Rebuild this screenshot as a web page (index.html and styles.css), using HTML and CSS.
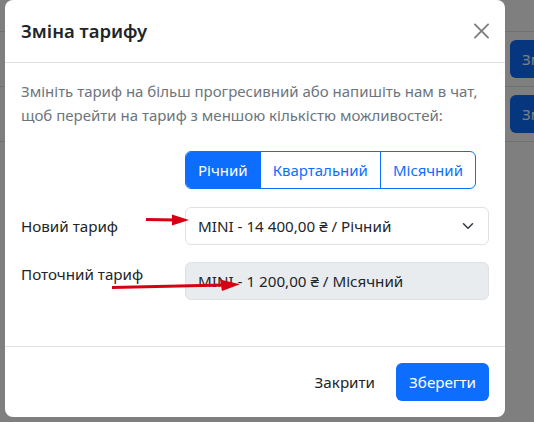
FILE: index.html
```html
<!DOCTYPE html>
<html lang="uk">
<head>
<meta charset="utf-8">
<title>Зміна тарифу</title>
<link rel="stylesheet" href="styles.css">
</head>
<body>
<div class="page">
  <div class="page-row page-row-top"></div>
  <div class="page-row"><span class="page-btn">Зм</span></div>
  <div class="page-row"><span class="page-btn">Зм</span></div>
</div>
<div class="backdrop"></div>
<div class="modal">
  <div class="modal-header">
    <h5 class="modal-title">Зміна тарифу</h5>
    <span class="btn-close">
      <svg viewBox="0 0 16 16" width="16" height="16"><path d="M.293.293a1 1 0 0 1 1.414 0L8 6.586 14.293.293a1 1 0 1 1 1.414 1.414L9.414 8l6.293 6.293a1 1 0 0 1-1.414 1.414L8 9.414l-6.293 6.293a1 1 0 0 1-1.414-1.414L6.586 8 .293 1.707a1 1 0 0 1 0-1.414z"/></svg>
    </span>
  </div>
  <div class="modal-body">
    <p class="note">Змініть тариф на більш прогресивний або напишіть нам в чат, щоб перейти на тариф з меншою кількістю можливостей:</p>
    <div class="form-row row-group">
      <div></div>
      <div class="btn-group">
        <span class="seg active">Річний</span>
        <span class="seg">Квартальний</span>
        <span class="seg">Місячний</span>
      </div>
    </div>
    <div class="form-row row-select">
      <div class="label label-center">Новий тариф</div>
      <div class="select">
        <span>MINI - 14 400,00 ₴ / Річний</span>
        <svg class="chev" viewBox="0 0 16 16" width="16" height="12"><path fill="none" stroke="#343a40" stroke-linecap="round" stroke-linejoin="round" stroke-width="2" d="m2 5 6 6 6-6"/></svg>
      </div>
    </div>
    <div class="form-row row-current">
      <div class="label">Поточний тариф</div>
      <div class="input-ro">MINI - 1 200,00 ₴ / Місячний</div>
    </div>
  </div>
  <div class="modal-footer">
    <span class="btn btn-link">Закрити</span>
    <span class="btn btn-primary">Зберегти</span>
  </div>
</div>
<svg class="annot" width="534" height="422" viewBox="0 0 534 422">
  <line x1="146" y1="219.5" x2="176" y2="220" stroke="#d60012" stroke-width="3"/>
  <polygon points="172,214.5 189,220 172,225.5" fill="#d60012"/>
  <line x1="112" y1="287.5" x2="224" y2="285" stroke="#d60012" stroke-width="3"/>
  <polygon points="220,279.5 240,284.3 222,291" fill="#d60012"/>
</svg>
</body>
</html>
```
FILE: styles.css
```css
* { box-sizing: border-box; }
html, body { margin: 0; padding: 0; }
body {
  width: 534px;
  height: 422px;
  overflow: hidden;
  background: #fff;
  font-family: "Noto Sans", "Open Sans", sans-serif;
  font-size: 16px;
  line-height: 24px;
  color: #212529;
}
.page { width: 534px; }
.page-row {
  height: 55px;
  border-bottom: 1px solid #dee2e6;
  padding: 8px 0 8px 510px;
}
.page-row-top { height: 32px; padding: 0; }
.page-btn {
  display: inline-block;
  width: 24px;
  height: 38px;
  padding: 7px 0 7px 12px;
  background: #0d6efd;
  color: #fff;
  border-radius: 6px 0 0 6px;
  white-space: nowrap;
  overflow: hidden;
  font-size: 15px;
}
.backdrop {
  position: fixed;
  inset: 0;
  background: rgba(0, 0, 0, 0.5);
}
.modal {
  position: fixed;
  left: 5px;
  top: 0;
  width: 500px;
  background: #fff;
  border-radius: 8px;
}
.modal-header {
  display: flex;
  align-items: center;
  justify-content: space-between;
  padding: 16px;
  border-bottom: 1px solid #dee2e6;
}
.modal-title {
  margin: 0;
  font-size: 18.5px;
  line-height: 30px;
  font-weight: 600;
}
.btn-close {
  display: flex;
  align-items: center;
  justify-content: center;
  width: 32px;
  height: 32px;
  margin: -8px -8px -8px auto;
  opacity: 0.5;
}
.btn-close svg { display: block; width: 15px; height: 16px; }
.modal-body { padding: 16px 16px 46px; }
.note {
  margin: 0 0 24px;
  color: #6c757d;
  font-size: 15px;
}
.form-row {
  display: grid;
  grid-template-columns: 140px 1fr;
  column-gap: 24px;
}
.row-group { margin-bottom: 18px; }
.row-select { margin-bottom: 17px; }
.btn-group {
  display: flex;
  justify-self: start;
  border: 1px solid #0d6efd;
  border-radius: 6px;
  overflow: hidden;
}
.seg {
  padding: 6px 12px;
  color: #0d6efd;
  border-left: 1px solid #0d6efd;
  font-size: 15px;
}
.seg:first-child { border-left: 0; }
.seg.active { background: #0d6efd; color: #fff; }
.label { font-size: 15.2px; }
.label-center { padding: 7px 0; }
.select, .input-ro {
  height: 38px;
  border: 1px solid #dee2e6;
  border-radius: 6px;
  padding: 6px 12px;
  font-size: 15.2px;
}
.select {
  display: flex;
  align-items: center;
  justify-content: space-between;
}
.chev { display: block; }
.input-ro { background: #e9ecef; }
.modal-footer {
  display: flex;
  justify-content: flex-end;
  align-items: center;
  gap: 8px;
  padding: 16px;
  border-top: 1px solid #dee2e6;
}
.btn {
  display: inline-block;
  height: 38px;
  padding: 6px 12px;
  border: 1px solid transparent;
  border-radius: 6px;
  font-size: 15.2px;
}
.btn-primary { background: #0d6efd; color: #fff; }
.btn-link { color: #212529; }
.annot {
  position: fixed;
  left: 0;
  top: 0;
  pointer-events: none;
}
```
